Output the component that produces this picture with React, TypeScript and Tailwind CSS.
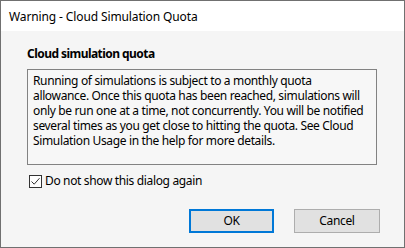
import React from "react";

const lines = [
  "Running of simulations is subject to a monthly quota",
  "allowance. Once this quota has been reached, simulations will",
  "only be run one at a time, not concurrently. You will be notified",
  "several times as you get close to hitting the quota. See Cloud",
  "Simulation Usage in the help for more details.",
];

export default function App() {
  const font = { fontFamily: '"Noto Sans", "Open Sans", Arial, sans-serif' };
  return (
    <div
      className="w-[405px] h-[248px] border border-[#707070] flex flex-col text-[12px] text-black overflow-hidden"
      style={font}
    >
      <div className="h-[30px] bg-white flex items-center pl-[8px] shrink-0 text-[12px] leading-[15px] tracking-[-0.12px]">
        Warning - Cloud Simulation Quota
      </div>
      <div className="flex-1 bg-[#f5f5f5] flex flex-col px-[26px] tracking-[-0.35px]">
        <div className="font-bold mt-[15px] h-[16px] leading-[16px] tracking-[-0.55px]">Cloud simulation quota</div>
        <div className="mt-[7px] w-[350px] h-[96px] border border-[#828282] bg-[#f7f7f7] pl-[5px] pr-[4px] pt-[3px] leading-[15px]">
          {lines.map((l) => (
            <div key={l} className="whitespace-nowrap">
              {l}
            </div>
          ))}
        </div>
        <div className="flex items-center mt-[9px] ml-[2px] h-[14px]">
          <div className="w-[13px] h-[13px] border border-[#333] bg-white flex items-center justify-center">
            <svg width="11" height="11" viewBox="0 0 11 11">
              <path d="M1.5 5.5 L4.2 8.2 L9.5 2.2" fill="none" stroke="#333" strokeWidth="1" />
            </svg>
          </div>
          <span className="ml-[3px] leading-[14px]">Do not show this dialog again</span>
        </div>
        <div className="flex justify-end mt-[21px] gap-[20px] mr-[-2px]">
          <button className="w-[85px] h-[24px] border-2 border-[#0078d7] bg-[#e1e1e1] text-[12px] leading-[18px]">
            OK
          </button>
          <button className="w-[86px] h-[24px] border border-[#adadad] bg-[#e1e1e1] text-[12px] leading-[20px]">
            Cancel
          </button>
        </div>
      </div>
    </div>
  );
}
